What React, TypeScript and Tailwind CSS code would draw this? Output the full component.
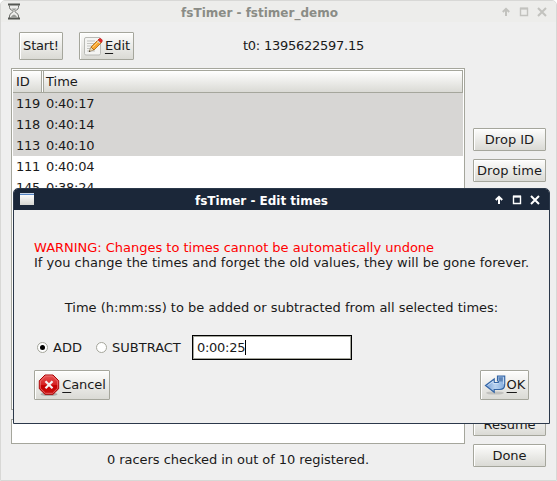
import React from "react";

const rows = [
  { id: "119", time: "0:40:17", selected: true },
  { id: "118", time: "0:40:14", selected: true },
  { id: "113", time: "0:40:10", selected: true },
  { id: "111", time: "0:40:04", selected: false },
  { id: "145", time: "0:38:24", selected: false },
];

function Button({ className = "", children }: { className?: string; children: React.ReactNode }) {
  return (
    <button
      className={`flex shrink-0 items-center justify-center whitespace-nowrap rounded-[1px] border border-[#a5a69c] bg-gradient-to-b from-[#fdfdfc] to-[#dadad5] shadow-[inset_1px_1px_0_#ffffff] ${className}`}
    >
      {children}
    </button>
  );
}

function WindowControls() {
  return (
    <svg width="46" height="10" viewBox="0 0 46 10" fill="none" stroke="currentColor" strokeWidth="2">
      <path d="M4 9V2.500M0.800 5 4 1.800 7.200 5" />
      <path d="M18.500 1.500h7v7h-7z" strokeWidth="1.400" />
      <path d="M18 1.500h8" />
      <path d="m36 1 8 8M44 1l-8 8" />
    </svg>
  );
}

function Hourglass() {
  return (
    <svg width="14" height="17" viewBox="0 0 14 17" fill="none" stroke="#6d6f6b">
      <path d="M1 1.500h12M1 15.500h12" stroke="#555753" strokeWidth="1.800" />
      <path d="M2.500 2.500v2C2.500 7 6 7 6 8.500S2.500 10 2.500 13v2M11.500 2.500v2C11.500 7 8 7 8 8.500S11.500 10 11.500 13v2" />
      <path d="M4.500 5.500h5L7 8zM4 14.500c0-2 3-3 3-3s3 1 3 3z" fill="#999b97" stroke="none" />
    </svg>
  );
}

function EditIcon() {
  return (
    <svg width="20" height="20" viewBox="0 0 20 20" fill="none">
      <rect x="1.500" y="1.500" width="16" height="17.500" rx="1.500" fill="#f4f4f2" stroke="#b9bab6" />
      <path d="M4 5h8M4 7.500h7M4 10h5M4 12.500h4M4 15h8" stroke="#c3c4c1" />
      <path d="m6 15.500 2-4.500 3 3z" fill="#edd9b0" stroke="#8b7350" strokeWidth=".6" />
      <path d="m8 11 7.500-7.500 3 3L11 14z" fill="#f9a62e" stroke="#a8640c" strokeWidth=".8" />
      <path d="m9.500 11.500 6.500-6.500" stroke="#ffd080" />
      <path d="m14.500 4.500 2.500 2.500" stroke="#d5d7d2" strokeWidth="1.500" />
      <path d="m15.500 3.500c1-1.300 2-1.300 3-.3s1 2 0 3l-.5.400-2.900-2.700z" fill="#e52c2c" stroke="#bd1919" strokeWidth=".7" />
      <path d="m5.800 16 .8-1.600.9.800z" fill="#222" />
    </svg>
  );
}

function CancelIcon() {
  return (
    <svg width="22" height="22" viewBox="0 0 22 22" fill="none">
      <defs>
        <linearGradient id="stop" x1="0" y1="0" x2="0" y2="1">
          <stop offset="0" stopColor="#e75555" />
          <stop offset=".5" stopColor="#d62222" />
          <stop offset=".55" stopColor="#c30000" />
          <stop offset="1" stopColor="#cc1111" />
        </linearGradient>
      </defs>
      <ellipse cx="11" cy="20.200" rx="8.500" ry="1.700" fill="#777" opacity=".5" />
      <path d="M7 1h8l5.700 5.700v8L15 20.300H7l-5.700-5.600v-8z" fill="url(#stop)" stroke="#a90000" />
      <path d="M7.500 2h7l5.200 5.200v7l-5.200 5.100h-7l-5.200-5.100v-7z" stroke="#ef8888" strokeWidth=".7" />
      <path d="m7.500 7.200 7 7M14.500 7.200l-7 7" stroke="#f3f3f3" strokeWidth="2.300" />
    </svg>
  );
}

function OkIcon() {
  return (
    <svg width="22" height="20" viewBox="0 0 22 20" fill="none">
      <defs>
        <linearGradient id="arrow" x1="0" y1="0" x2="1" y2="0">
          <stop offset="0" stopColor="#6f9bd3" />
          <stop offset=".5" stopColor="#b9d2ef" />
          <stop offset="1" stopColor="#82abdc" />
        </linearGradient>
      </defs>
      <ellipse cx="11" cy="18" rx="9" ry="1.600" fill="#777" opacity=".3" />
      <path
        d="M13.500 1h7.200v8.500c0 3.300-2 5-5 5h-5.500v2.700L1.500 10.500 10.200 4v3.500h3.600c1 0 1-1.200-.3-1.700z"
        fill="url(#arrow)"
        stroke="#3465a4"
        strokeWidth="1.200"
      />
      <path d="M14.500 2.200h4.300v4.300h-3.800z" fill="#5f86b8" />
      <path d="M3.500 10.500 9.200 6.300v2.300h5.300M19.600 2.200v7" stroke="#d7e6f7" strokeWidth=".8" />
    </svg>
  );
}

function Radio({ checked = false }: { checked?: boolean }) {
  return (
    <span className="flex size-[11px] shrink-0 items-center justify-center rounded-full border border-[#a5a69c] bg-white">
      {checked && <span className="size-[5px] rounded-full bg-black" />}
    </span>
  );
}

function EditDialog() {
  return (
    <div className="absolute left-[13px] top-[188px] flex h-[236px] w-[537px] flex-col overflow-hidden rounded-t-[5px] border border-[#2b384a] bg-[#efefef]">
      <header className="flex h-[21px] shrink-0 items-center bg-[#1b2739] text-white">
        <div className="mb-px ml-[6px] h-[12px] w-[14px] border-t border-[#c5d3e6] bg-gradient-to-b from-white to-[#d6d6d2]">
          <div className="h-px bg-[#5585c5]" />
        </div>
        <div className="flex-1 pr-[6px] pt-[2px] text-center text-[12px] font-bold leading-[16px]">fsTimer - Edit times</div>
        <div className="mr-[8px] pt-px"><WindowControls /></div>
      </header>
      <div className="flex flex-col px-[20px] pt-[30px]">
        <p className="whitespace-nowrap leading-[15px] tracking-[-0.015px] text-[#ff0000]">WARNING: Changes to times cannot be automatically undone</p>
        <p className="whitespace-nowrap leading-[15px]">If you change the times and forget the old values, they will be gone forever.</p>
        <p className="mt-[30px] whitespace-nowrap text-center leading-[15px]">Time (h:mm:ss) to be added or subtracted from all selected times:</p>
        <div className="mt-[20px] flex h-[25px] items-center pl-[3px]">
          <Radio checked />
          <span className="ml-[5px] w-[43px]">ADD</span>
          <Radio />
          <span className="ml-[5px] w-[80px]">SUBTRACT</span>
          <div className="flex h-[25px] w-[160px] items-center border border-black bg-white pl-[4px] shadow-[inset_0_0_0_1px_#a5a69c]">
            <span className="tracking-[-0.28px]">0:00:25</span>
            <span className="h-[15px] w-px bg-black" />
          </div>
        </div>
        <div className="mt-[10px] flex justify-between">
          <Button className="h-[30px] w-[76px]">
            <CancelIcon /><span className="ml-[2px] tracking-[-0.1px]"><u className="underline-offset-[3px]">C</u>ancel</span>
          </Button>
          <Button className="h-[30px] w-[49px]">
            <OkIcon /><span className="ml-px"><u className="underline-offset-[3px]">O</u>K</span>
          </Button>
        </div>
      </div>
    </div>
  );
}

export default function App() {
  return (
    <div className="h-[481px] w-[557px] overflow-hidden bg-white font-['DejaVu_Sans',sans-serif] text-[13px] leading-[16px] text-[#1a1a1a]">
      <div className="relative flex h-[481px] flex-col rounded-t-[5px] border border-[#d8d8d6] bg-[#efefef]">
        <header className="flex h-[21px] shrink-0 items-center rounded-t-[4px] bg-[#ededeb] text-[#8a8c86]">
          <div className="ml-[6px]"><Hourglass /></div>
          <div className="flex-1 pr-[4px] pt-[2px] text-center text-[12px] font-bold">fsTimer - fstimer_demo</div>
          <div className="mr-[8px] pt-px text-[#c2c2be]"><WindowControls /></div>
        </header>
        <div className="flex flex-1 gap-[8px] pl-[10px]">
          <main className="flex w-[454px] flex-col">
            <div className="mt-[10px] flex h-[28px] items-center pl-[8px]">
              <Button className="h-[28px] w-[44px] tracking-[-0.2px]">Start!</Button>
              <Button className="ml-[16px] h-[28px] w-[55px]">
                <EditIcon /><span className="ml-[2px]"><u className="underline-offset-[3px]">E</u>dit</span>
              </Button>
              <span className="ml-[109px] whitespace-nowrap tracking-[-0.25px]">t0: 1395622597.15</span>
            </div>
            <div className="mt-[8px] h-[342px] overflow-hidden border border-[#a5a69c] bg-white p-px">
              <div className="flex h-[23px] border-y border-[#a5a69c]">
                <div className="flex w-[29px] items-center border-r border-[#a5a69c] bg-gradient-to-b from-white to-[#dadad5] pl-[3px]">ID</div>
                <div className="ml-px flex flex-1 items-center border-x border-[#a5a69c] bg-gradient-to-b from-white to-[#dadad5] pl-[2px]">Time</div>
              </div>
              {rows.map((row) => (
                <div key={row.id} className={row.selected ? "flex h-[21px] items-center bg-[#d7d6d4] tracking-[-0.28px]" : "flex h-[21px] items-center bg-white tracking-[-0.28px]"}>
                  <span className="w-[33px] pl-[3px]">{row.id}</span>
                  <span>{row.time}</span>
                </div>
              ))}
            </div>
            <div className="mt-[9px] h-[25px] border border-[#a5a69c] bg-white" />
            <p className="mt-[8px] text-center tracking-[-0.05px]">0 racers checked in out of 10 registered.</p>
          </main>
          <aside className="flex w-[73px] flex-col pt-[106px]">
            <Button className="h-[23px]">Drop ID</Button>
            <Button className="mt-[8px] h-[23px]">Drop time</Button>
            <Button className="mt-[231px] h-[23px]">Resume</Button>
            <Button className="mt-[8px] h-[23px]">Done</Button>
          </aside>
        </div>
        <div className="absolute -left-px -top-px"><EditDialog /></div>
      </div>
    </div>
  );
}
